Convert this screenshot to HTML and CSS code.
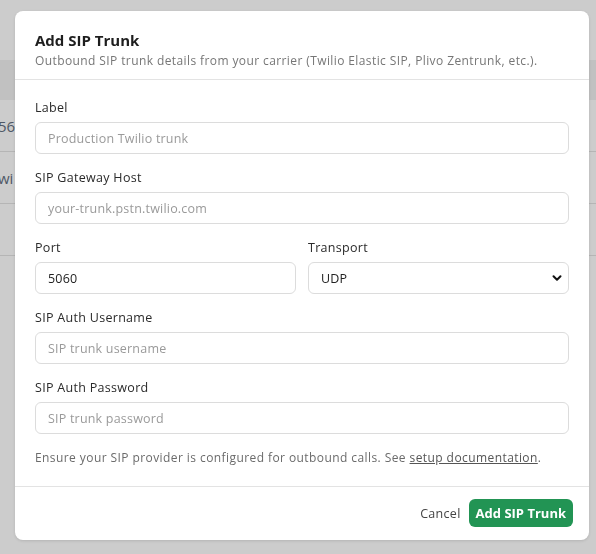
FILE: index.html
```html
<!DOCTYPE html>
<html lang="en">
<head>
    <meta charset="UTF-8">
    <meta name="viewport" content="width=device-width, initial-scale=1.0">
    <title>Add SIP Trunk</title>
    <link rel="stylesheet" href="styles.css">
</head>
<body>
    <!-- Page behind the dialog -->
    <div class="page">
        <div class="table-head"></div>
        <div class="table-row"><span>56</span></div>
        <div class="table-row"><span>wi</span></div>
        <div class="table-row"></div>
    </div>

    <!-- Dialog -->
    <div class="backdrop">
        <form class="modal">
            <header class="modal-header">
                <h2>Add SIP Trunk</h2>
                <p>Outbound SIP trunk details from your carrier (Twilio Elastic SIP, Plivo Zentrunk, etc.).</p>
            </header>

            <div class="modal-body">
                <div class="field">
                    <label>Label</label>
                    <input type="text" placeholder="Production Twilio trunk">
                </div>
                <div class="field">
                    <label>SIP Gateway Host</label>
                    <input type="text" placeholder="your-trunk.pstn.twilio.com">
                </div>
                <div class="field-row">
                    <div class="field">
                        <label>Port</label>
                        <input type="text" value="5060">
                    </div>
                    <div class="field">
                        <label>Transport</label>
                        <div class="select-wrap">
                            <select>
                                <option>UDP</option>
                                <option>TCP</option>
                                <option>TLS</option>
                            </select>
                            <svg class="chevron" width="12" height="12" viewBox="0 0 12 12"><path d="M2.5 4.2 6 7.7 9.5 4.2" fill="none" stroke="#111" stroke-width="2" stroke-linecap="round" stroke-linejoin="round"/></svg>
                        </div>
                    </div>
                </div>
                <div class="field">
                    <label>SIP Auth Username</label>
                    <input type="text" placeholder="SIP trunk username">
                </div>
                <div class="field">
                    <label>SIP Auth Password</label>
                    <input type="password" placeholder="SIP trunk password">
                </div>
                <p class="help">Ensure your SIP provider is configured for outbound calls. See <a href="#">setup documentation</a>.</p>
            </div>

            <footer class="modal-footer">
                <button type="button" class="btn-link">Cancel</button>
                <button type="submit" class="btn-primary">Add SIP Trunk</button>
            </footer>
        </form>
    </div>
</body>
</html>
```

FILE: styles.css
```css
/* General body styling */
body {
    font-family: "Open Sans", "Noto Sans", sans-serif;
    margin: 0;
    padding: 0;
    background-color: #cccccc;
    color: #222;
}

/* Page behind the overlay */
.page {
    padding-top: 60px;
}

.table-head {
    height: 40px;
    background-color: #c1c1c1;
}

.table-row {
    height: 51px;
    border-bottom: 1px solid #b5b5b5;
    display: flex;
    align-items: center;
    font-size: 15px;
    color: #4f5866;
}

.table-row span {
    margin-left: -2px;
}

/* Dialog */
.backdrop {
    position: fixed;
    inset: 0;
}

.modal {
    position: absolute;
    top: 11px;
    left: 15px;
    width: 574px;
    background-color: #fff;
    border-radius: 8px;
    box-shadow: 0 1px 3px rgba(0, 0, 0, 0.12);
}

.modal-header {
    padding: 19px 20px 9px;
    border-bottom: 1px solid #e3e3e3;
}

.modal-header h2 {
    margin: 0;
    font-size: 15px;
    line-height: 20px;
    font-weight: 700;
    color: #1e1e1e;
}

.modal-header p {
    margin: 2px 0 0;
    font-size: 12px;
    line-height: 18px;
    letter-spacing: 0.4px;
    color: #767676;
}

.modal-body {
    padding: 19px 20px 19px;
}

.field {
    display: flex;
    flex-direction: column;
    margin-bottom: 15px;
}

.field label {
    font-size: 12.5px;
    line-height: 18px;
    letter-spacing: 0.3px;
    color: #2a2a2a;
    margin-bottom: 5px;
}

.field input,
.field select {
    height: 32px;
    box-sizing: border-box;
    border: 1px solid #dcdcdc;
    border-radius: 6px;
    padding: 0 12px;
    font-family: inherit;
    font-size: 12.5px;
    letter-spacing: 0.2px;
    color: #222;
    background-color: #fff;
    width: 100%;
}

.field input::placeholder {
    color: #9a9a9a;
}

.field-row {
    display: grid;
    grid-template-columns: 1fr 1fr;
    gap: 12px;
}

.select-wrap {
    position: relative;
}

.field select {
    appearance: none;
    -webkit-appearance: none;
}

.chevron {
    position: absolute;
    right: 6px;
    top: 10px;
}

.help {
    margin: 7px 0 0;
    font-size: 12px;
    line-height: 18px;
    letter-spacing: 0.42px;
    color: #6b6b6b;
}

.help a {
    color: #555;
}

.modal-footer {
    border-top: 1px solid #e3e3e3;
    padding: 12px 16px 13px;
    display: flex;
    justify-content: flex-end;
    align-items: center;
    gap: 8px;
}

/* Buttons styling */
.btn-link {
    border: none;
    background: none;
    font-family: inherit;
    font-size: 12.5px;
    letter-spacing: 0.3px;
    color: #444;
    padding: 0;
    cursor: pointer;
}

.btn-primary {
    height: 28px;
    padding: 0 7px;
    border: none;
    border-radius: 6px;
    background-color: #229454;
    color: #fff;
    font-family: inherit;
    font-size: 13px;
    font-weight: 700;
    cursor: pointer;
}
```
